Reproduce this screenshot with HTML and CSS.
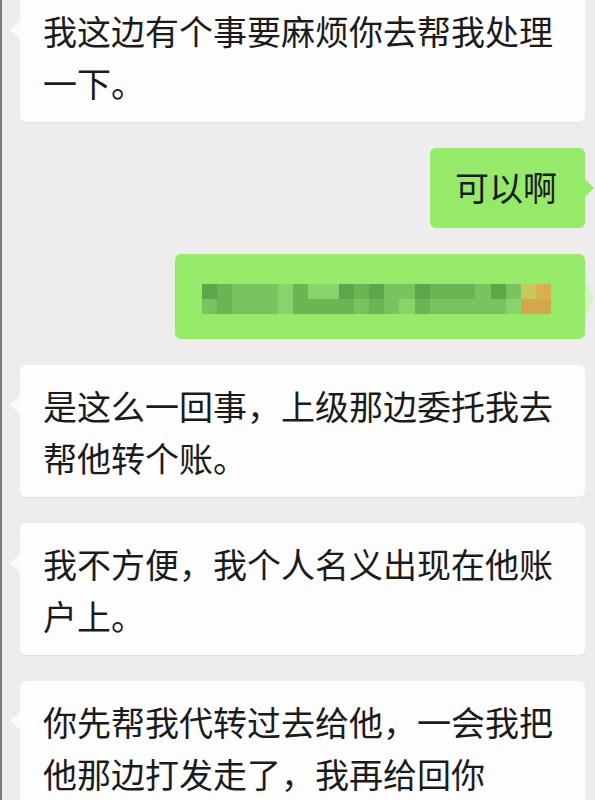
FILE: index.html
```html
<!DOCTYPE html>
<html lang="zh-CN">
<head>
  <meta charset="UTF-8">
  <meta name="viewport" content="width=device-width, initial-scale=1.0">
  <title>聊天记录</title>
  <link rel="stylesheet" href="styles.css">
</head>
<body>
  <!-- Chat -->
  <div class="chat">
    <div class="bubble in">我这边有个事要麻烦你去帮我处理一下。</div>

    <div class="bubble out">可以啊</div>

    <!-- pixelated message -->
    <div class="bubble out mosaic">
      <div class="pixels">
        <span class="a"></span><span class="b"></span><span class="c"></span><span class="c"></span><span class="c"></span><span class="d"></span><span class="b"></span><span class="d"></span><span class="d"></span><span class="a"></span><span class="b"></span><span class="a"></span><span class="c"></span><span class="c"></span><span class="a"></span><span class="b"></span><span class="b"></span><span class="b"></span><span class="c"></span><span class="a"></span><span class="c"></span><span class="y"></span><span class="e"></span>
        <span class="c"></span><span class="b"></span><span class="c"></span><span class="c"></span><span class="c"></span><span class="d"></span><span class="b"></span><span class="b"></span><span class="b"></span><span class="b"></span><span class="c"></span><span class="b"></span><span class="c"></span><span class="d"></span><span class="b"></span><span class="c"></span><span class="c"></span><span class="c"></span><span class="c"></span><span class="c"></span><span class="d"></span><span class="f"></span><span class="f"></span>
      </div>
    </div>

    <div class="bubble in">是这么一回事，上级那边委托我去帮他转个账。</div>

    <div class="bubble in">我不方便，我个人名义出现在他账户上。</div>

    <div class="bubble in">你先帮我代转过去给他，一会我把他那边打发走了，我再给回你</div>
  </div>
</body>
</html>
```

FILE: styles.css
```css
/* General */
body {
  margin: 0;
  height: 800px;
  overflow: hidden;
  background: #ededed;
  border-left: 2px solid #7c7c7c;
  font-family: "Noto Sans CJK SC", "Noto Sans", sans-serif;
  color: #1b1b1b;
}

.chat {
  display: flex;
  flex-direction: column;
  gap: 26px;
  margin-top: -10px;
}

/* Bubbles */
.bubble {
  position: relative;
  font-size: 34px;
  line-height: 52px;
  border-radius: 6px;
}

.bubble::before {
  content: "";
  position: absolute;
  top: 31px;
  border-top: 9px solid transparent;
  border-bottom: 9px solid transparent;
}

.in {
  background: #fdfdfd;
  margin: 0 10px 0 18px;
  padding: 15px 24px 13px 23px;
  box-shadow: 0 1px 0 #e2e2e2;
}

.in::before {
  left: -10px;
  border-right: 10px solid #fbfbfb;
}

.out {
  align-self: flex-end;
  background: #95ea6a;
  margin-right: 10px;
  padding: 13px 28px 15px 25px;
}

.out::before {
  right: -9px;
  border-left: 9px solid #95ea6a;
}

/* Pixelated message */
.mosaic {
  width: 350px;
  padding: 30px 33px 25px 27px;
}

.mosaic::before {
  top: 24px;
  border-top-width: 20px;
  border-bottom-width: 20px;
  border-left-color: #d4f2c2;
}

.pixels {
  display: grid;
  grid-template-columns: repeat(23, 15.2px);
  grid-auto-rows: 15px;
}

.pixels .a { background: #5fa64a; }
.pixels .b { background: #6cb454; }
.pixels .c { background: #7bc35f; }
.pixels .d { background: #89d36a; }
.pixels .y { background: #c6c859; }
.pixels .e { background: #d8b050; }
.pixels .f { background: #d6a64a; }
```
